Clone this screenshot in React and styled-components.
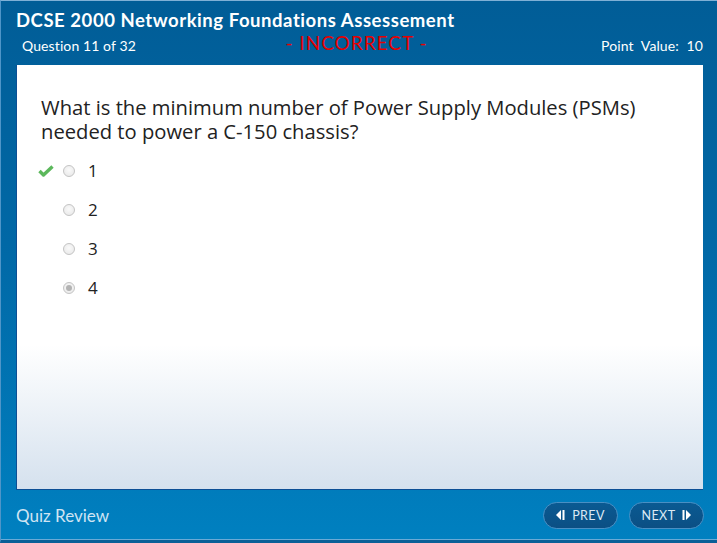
import React from 'react';
import styled, { createGlobalStyle } from 'styled-components';

const GlobalStyle = createGlobalStyle`
    html, body {
        margin: 0;
        padding: 0;
        background: #0071b3;
    }
`;

const Frame = styled.div`
    box-sizing: border-box;
    width: 717px;
    height: 543px;
    display: flex;
    flex-direction: column;
    border-top: 1px solid #7fb0d6;
    border-left: 1px solid #4f95c8;
    border-bottom: 3px solid #0a5f97;
    box-shadow: inset 0 -1px 0 #6aaad6;
    background: linear-gradient(to bottom, #015d97 0%, #0168a6 45%, #0080c0 100%);
    font-family: Lato, 'Open Sans', sans-serif;
    color: #fff;
`;

const Header = styled.header`
    height: 64px;
    padding: 0 14px 0 15px;
    display: flex;
    flex-direction: column;
`;

const Title = styled.h1`
    margin: 0;
    padding-top: 8px;
    font-size: 18.5px;
    font-weight: 700;
    line-height: 22px;
    letter-spacing: 0.55px;
`;

const SubBar = styled.div`
    display: grid;
    grid-template-columns: 1fr auto 1fr;
    align-items: center;
    margin-top: 5px;
    padding-left: 6px;
    font-size: 14px;
    letter-spacing: 0.1px;
`;

const Status = styled.span`
    color: #e60000;
    font-family: Lato, sans-serif;
    font-size: 19px;
    font-weight: 400;
    letter-spacing: 1px;
    margin-top: -5px;
    margin-left: -12px;
`;

const PointValue = styled.span`
    justify-self: end;
    word-spacing: 4px;
    margin-top: 1px;
`;

const Card = styled.main`
    flex: 1;
    margin: 0 14px 0 15px;
    padding: 30px 24px 0 24px;
    background: linear-gradient(to bottom, #ffffff 0%, #ffffff 66%, #eef3f8 80%, #d5e1ee 100%);
    border-left: 1px solid #0c4f95;
    border-bottom: 1px solid #0c4f95;
    color: #222;
    font-family: 'Open Sans', sans-serif;
`;

const Question = styled.p`
    margin: 0 0 8px 0;
    font-size: 20.2px;
    line-height: 24px;
`;

const Options = styled.ul`
    list-style: none;
    margin: 0;
    padding: 0;
`;

const Option = styled.li`
    display: flex;
    align-items: center;
    height: 39px;
    font-size: 17px;
`;

const Mark = styled.span`
    width: 22px;
    display: flex;
    justify-content: flex-start;
    margin-left: -3px;
    margin-right: 3px;
`;

const Radio = styled.span`
    box-sizing: border-box;
    width: 12px;
    height: 12px;
    border-radius: 50%;
    border: 1px solid #c4c4c4;
    background: radial-gradient(circle at 50% 40%, #fafafa, #e6e6e6);
    margin-right: 13px;
    display: flex;
    align-items: center;
    justify-content: center;
    &::after {
        content: '';
        display: ${({ selected }) => (selected ? 'block' : 'none')};
        width: 6px;
        height: 6px;
        border-radius: 50%;
        background: #b3b3b3;
    }
`;

const Footer = styled.footer`
    height: 50px;
    padding: 0 13px 0 15px;
    display: flex;
    align-items: center;
    justify-content: space-between;
`;

const ReviewLabel = styled.span`
    font-size: 17px;
    font-weight: 400;
    color: #cfe4f3;
    margin-top: 1px;
`;

const NavGroup = styled.div`
    display: flex;
    gap: 11px;
`;

const NavButton = styled.button`
    box-sizing: border-box;
    width: 75px;
    height: 27px;
    border-radius: 14px;
    border: 1px solid #4a8fc3;
    background: linear-gradient(to bottom, #0a5a92, #0b4f84);
    color: #dce9f4;
    font-family: Lato, sans-serif;
    font-size: 12.5px;
    letter-spacing: 0.4px;
    display: flex;
    align-items: center;
    justify-content: center;
    gap: 7px;
    padding: 0;
`;

function StepIcon({ dir }) {
    return (
        <svg width="9" height="10" viewBox="0 0 9 10">
            {dir === 'prev' ? (
                <>
                    <polygon points="5,0 5,10 0,5" fill="#fff" />
                    <rect x="6.5" y="0" width="2" height="10" fill="#fff" />
                </>
            ) : (
                <>
                    <rect x="0.5" y="0" width="2" height="10" fill="#fff" />
                    <polygon points="4,0 4,10 9,5" fill="#fff" />
                </>
            )}
        </svg>
    );
}

function CheckIcon() {
    return (
        <svg width="16" height="12" viewBox="0 0 16 12">
            <path d="M1.5 6 L5.5 10 L14.5 1.5" stroke="#5cb85c" strokeWidth="3.4" fill="none" strokeLinejoin="round" />
        </svg>
    );
}

const answers = [
    { label: '1', correct: true },
    { label: '2' },
    { label: '3' },
    { label: '4', selected: true },
];

export default function App() {
    return (
        <>
            <GlobalStyle />
            <Frame>
                <Header>
                    <Title>DCSE 2000 Networking Foundations Assessement</Title>
                    <SubBar>
                        <span>Question 11 of 32</span>
                        <Status>- INCORRECT -</Status>
                        <PointValue>Point Value: 10</PointValue>
                    </SubBar>
                </Header>
                <Card>
                    <Question>
                        What is the minimum number of Power Supply Modules (PSMs)
                        <br />
                        needed to power a C-150 chassis?
                    </Question>
                    <Options>
                        {answers.map((a) => (
                            <Option key={a.label}>
                                <Mark>{a.correct && <CheckIcon />}</Mark>
                                <Radio selected={a.selected} />
                                {a.label}
                            </Option>
                        ))}
                    </Options>
                </Card>
                <Footer>
                    <ReviewLabel>Quiz Review</ReviewLabel>
                    <NavGroup>
                        <NavButton>
                            <StepIcon dir="prev" />
                            PREV
                        </NavButton>
                        <NavButton>
                            NEXT
                            <StepIcon dir="next" />
                        </NavButton>
                    </NavGroup>
                </Footer>
            </Frame>
        </>
    );
}
